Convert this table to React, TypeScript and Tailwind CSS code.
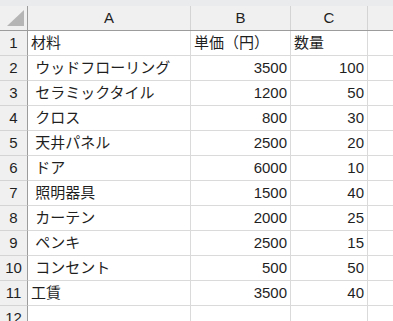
import React from "react";

const rows: [string, string, string][] = [
  ["材料", "単価（円）", "数量"],
  [" ウッドフローリング", "3500", "100"],
  [" セラミックタイル", "1200", "50"],
  [" クロス", "800", "30"],
  [" 天井パネル", "2500", "20"],
  [" ドア", "6000", "10"],
  [" 照明器具", "1500", "40"],
  [" カーテン", "2000", "25"],
  [" ペンキ", "2500", "15"],
  [" コンセント", "500", "50"],
  ["工賃", "3500", "40"],
  ["", "", ""],
];

const font = { fontFamily: "'Liberation Sans', 'Noto Sans CJK JP', sans-serif" };

export default function App() {
  return (
    <div className="w-[393px] h-[321px] overflow-hidden bg-white text-[15px] text-[#1f1f1f]" style={font}>
      <div className="h-[6px] bg-[#e9ebed]" />
      <div className="grid grid-cols-[28px_163px_100px_77px_1fr] h-[25px] bg-[#f0f0f0] border-b border-[#9c9c9c]">
        <div className="relative border-r border-[#9c9c9c]">
          <svg className="absolute left-[7px] top-[4px]" width="17" height="16" viewBox="0 0 17 16">
            <polygon points="17,0 17,16 0,16" fill="#b5b5b5" />
          </svg>
        </div>
        <div className="flex items-center justify-center border-r border-[#d4d4d4]">A</div>
        <div className="flex items-center justify-center border-r border-[#d4d4d4]">B</div>
        <div className="flex items-center justify-center border-r border-[#d4d4d4]">C</div>
        <div />
      </div>
      {rows.map((r, i) => (
        <div key={i} className="grid grid-cols-[28px_163px_100px_77px_1fr] h-[25px]">
          <div className="flex items-center justify-center bg-[#f0f0f0] border-r border-[#9c9c9c] border-b border-b-[#d4d4d4]">
            {i + 1}
          </div>
          <div className="flex items-center pl-[3px] whitespace-pre border-r border-b border-[#dadada]">{r[0]}</div>
          <div
            className={
              "flex items-center whitespace-pre border-r border-b border-[#dadada] " +
              (i === 0 ? "pl-[3px]" : "justify-end pr-[3px]")
            }
          >
            {r[1]}
          </div>
          <div
            className={
              "flex items-center whitespace-pre border-r border-b border-[#dadada] " +
              (i === 0 ? "pl-[3px]" : "justify-end pr-[3px]")
            }
          >
            {r[2]}
          </div>
          <div className="border-b border-[#dadada]" />
        </div>
      ))}
    </div>
  );
}
